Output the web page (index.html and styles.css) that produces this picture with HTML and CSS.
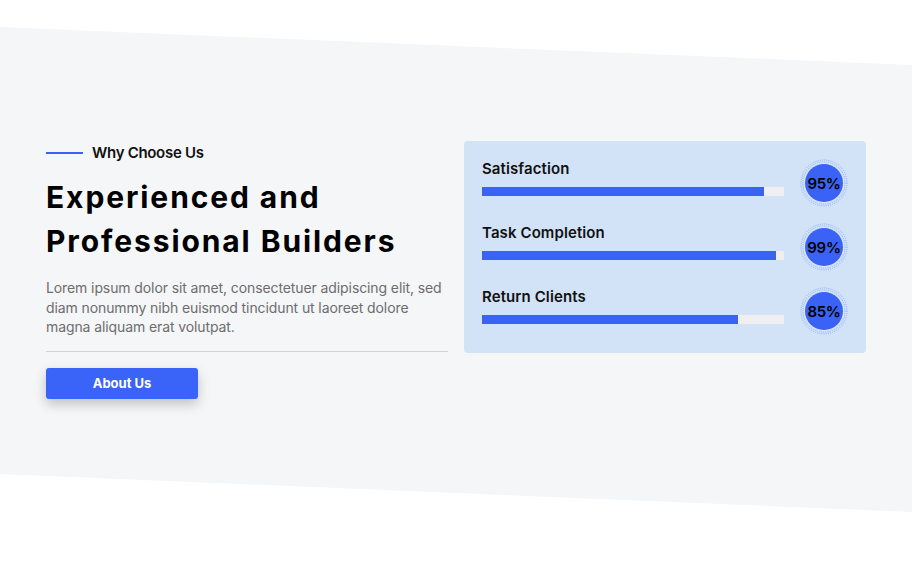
FILE: index.html
```html
<!DOCTYPE html>
<html lang="en">
<head>
<meta charset="utf-8">
<title>Why Choose Us</title>
<link rel="stylesheet" href="styles.css">
</head>
<body>
<section class="section">
  <div class="container">
    <div class="intro">
      <div class="eyebrow"><span class="eyebrow-line"></span><span>Why Choose Us</span></div>
      <h2 class="title">Experienced and<br>Professional Builders</h2>
      <p class="text">Lorem ipsum dolor sit amet, consectetuer adipiscing elit, sed diam nonummy nibh euismod tincidunt ut laoreet dolore magna aliquam erat volutpat.</p>
      <hr class="divider">
      <a class="button" href="#">About Us</a>
    </div>
    <div class="card">
      <div class="row">
        <div class="stat">
          <div class="label">Satisfaction</div>
          <div class="track"><div class="fill" style="width:93.5%"></div></div>
        </div>
        <div class="badge">
          <svg class="ring" viewBox="0 0 48 48" width="48" height="48"><circle cx="24" cy="24" r="23" /><circle cx="24" cy="24" r="21.2" /></svg>
          <span class="badge-core">95%</span>
        </div>
      </div>
      <div class="row">
        <div class="stat">
          <div class="label">Task Completion</div>
          <div class="track"><div class="fill" style="width:97.4%"></div></div>
        </div>
        <div class="badge">
          <svg class="ring" viewBox="0 0 48 48" width="48" height="48"><circle cx="24" cy="24" r="23" /><circle cx="24" cy="24" r="21.2" /></svg>
          <span class="badge-core">99%</span>
        </div>
      </div>
      <div class="row">
        <div class="stat">
          <div class="label">Return Clients</div>
          <div class="track"><div class="fill" style="width:84.8%"></div></div>
        </div>
        <div class="badge">
          <svg class="ring" viewBox="0 0 48 48" width="48" height="48"><circle cx="24" cy="24" r="23" /><circle cx="24" cy="24" r="21.2" /></svg>
          <span class="badge-core">85%</span>
        </div>
      </div>
    </div>
  </div>
</section>
</body>
</html>
```

FILE: styles.css
```css
* { box-sizing: border-box; }
html, body { margin: 0; padding: 0; background: #ffffff; }
body { font-family: Inter, "Liberation Sans", sans-serif; color: #111; }

.section {
  position: relative;
  height: 568px;
  overflow: hidden;
  padding-top: 141px;
}
.section::before {
  content: "";
  position: absolute;
  inset: 0;
  background: #f5f6f8;
  clip-path: polygon(0 27px, 100% 65px, 100% 512px, 0 474px);
  z-index: 0;
}

.container {
  position: relative;
  z-index: 1;
  display: grid;
  grid-template-columns: 402px 402px;
  column-gap: 16px;
  padding: 0 46px;
  align-items: start;
}

.intro { padding-top: 2px; }
.eyebrow {
  display: flex;
  align-items: center;
  gap: 9px;
  font-size: 15px;
  font-weight: 600;
  line-height: 20px;
  color: #111;
  letter-spacing: -0.3px;
}
.eyebrow-line {
  width: 37px;
  height: 2px;
  background: #3a63f6;
}
.title {
  margin: 12px 0 0;
  font-size: 30px;
  line-height: 44px;
  font-weight: 700;
  color: #000;
  letter-spacing: 1.9px;
}
.text {
  margin: 15px 0 0;
  max-width: 400px;
  font-size: 14px;
  line-height: 19.5px;
  color: #6d6d6d;
  letter-spacing: -0.1px;
}
.divider {
  margin: 14px 0 0;
  border: 0;
  height: 1px;
  background: #d3d3d5;
}
.button {
  display: flex;
  align-items: center;
  justify-content: center;
  margin-top: 16px;
  width: 152px;
  height: 31px;
  background: #3a63f8;
  color: #fff;
  border-radius: 3px;
  text-decoration: none;
  font-size: 13px;
  font-weight: 700;
  box-shadow: 0 5px 12px rgba(0,0,0,0.22);
}

.card {
  background: #d2e3f7;
  border-radius: 4px;
  padding: 18px;
  display: flex;
  flex-direction: column;
  gap: 16px;
}
.row {
  display: flex;
  align-items: flex-start;
  gap: 16px;
}
.stat { flex: 1; }
.label {
  font-size: 15px;
  font-weight: 600;
  line-height: 20px;
  color: #111;
  letter-spacing: 0.1px;
}
.track {
  margin-top: 8px;
  height: 9px;
  background: #efefef;
}
.fill {
  height: 100%;
  background: #3a63f6;
}
.badge {
  position: relative;
  width: 48px;
  height: 48px;
  flex: none;
  display: flex;
  align-items: center;
  justify-content: center;
}
.ring {
  position: absolute;
  inset: 0;
}
.ring circle {
  fill: none;
  stroke: #7f9ff5;
  stroke-width: 1;
  stroke-dasharray: 1 1.2;
  opacity: 0.8;
}
.badge-core {
  position: relative;
  width: 38px;
  height: 38px;
  border-radius: 50%;
  background: #3a63f6;
  display: flex;
  align-items: center;
  justify-content: center;
  font-size: 15px;
  font-weight: 600;
  color: #000;
  letter-spacing: -0.3px;
}
```
